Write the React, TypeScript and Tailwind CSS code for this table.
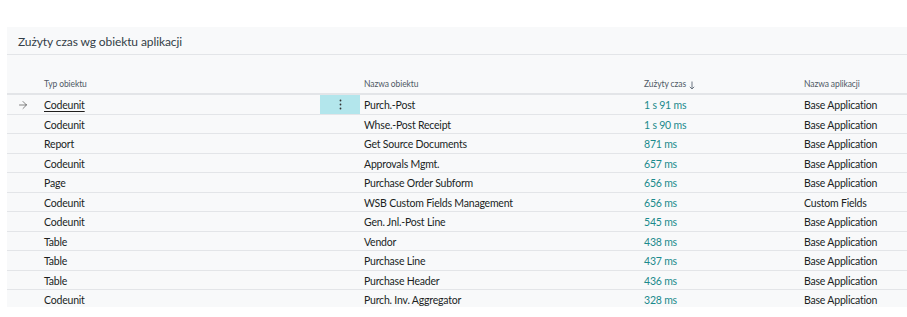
import { ArrowRight } from "lucide-react";

const rows = [
  { type: "Codeunit", name: "Purch.-Post", time: "1 s 91 ms", app: "Base Application" },
  { type: "Codeunit", name: "Whse.-Post Receipt", time: "1 s 90 ms", app: "Base Application" },
  { type: "Report", name: "Get Source Documents", time: "871 ms", app: "Base Application" },
  { type: "Codeunit", name: "Approvals Mgmt.", time: "657 ms", app: "Base Application" },
  { type: "Page", name: "Purchase Order Subform", time: "656 ms", app: "Base Application" },
  { type: "Codeunit", name: "WSB Custom Fields Management", time: "656 ms", app: "Custom Fields" },
  { type: "Codeunit", name: "Gen. Jnl.-Post Line", time: "545 ms", app: "Base Application" },
  { type: "Table", name: "Vendor", time: "438 ms", app: "Base Application" },
  { type: "Table", name: "Purchase Line", time: "437 ms", app: "Base Application" },
  { type: "Table", name: "Purchase Header", time: "436 ms", app: "Base Application" },
  { type: "Codeunit", name: "Purch. Inv. Aggregator", time: "328 ms", app: "Base Application" },
];

const cols = "grid grid-cols-[37px_276px_40px_280px_160px_1fr]";

export default function App() {
  return (
    <div className="w-[907px] h-[317px] bg-white pt-[27px] pl-[7px] font-['Lato',sans-serif] overflow-hidden">
      <div className="bg-[#f8f9fa] h-[280px] overflow-hidden">
        {/* title */}
        <div className="h-[28px] border-b border-[#e3e5e8] flex items-center pl-[11px] pt-[2px]">
          <span className="text-[12px] tracking-[-0.1px] text-[#333d47]">Zużyty czas wg obiektu aplikacji</span>
        </div>

        {/* column headers */}
        <div className={`${cols} mt-[19px] h-[21px] border-b-2 border-[#e3e5e8] items-center text-[8.5px] tracking-[-0.1px] text-[#505a66] pt-[2px]`}>
          <div />
          <div>Typ obiektu</div>
          <div />
          <div className="pl-[4px]">Nazwa obiektu</div>
          <div className="pl-[4px] flex items-center gap-[3px]">
            Zużyty czas
            <svg width="6" height="9" viewBox="0 0 6 9" className="mt-[1px]">
              <path d="M3 0.5V8M0.8 5.8L3 8L5.2 5.8" stroke="#6b7580" strokeWidth="1" fill="none" />
            </svg>
          </div>
          <div className="pl-[4px]">Nazwa aplikacji</div>
        </div>

        {rows.map((r, i) => (
          <div
            key={i}
            className={`${cols} h-[19.5px] border-b border-[#e3e5e8] items-center text-[10.5px] tracking-[-0.2px] text-[#201f1e] pt-[3px]`}
          >
            <div className="pl-[10px] flex items-center -mt-[1px]">
              {i === 0 && <ArrowRight size={12} strokeWidth={1.2} className="text-[#333]" />}
            </div>
            <div className={i === 0 ? "underline underline-offset-2" : ""}>{r.type}</div>
            <div className={`-mt-[3px] h-[18.5px] flex items-center justify-center ${i === 0 ? "bg-[#b3e6ec]" : ""}`}>
              {i === 0 && (
                <svg width="3" height="11" viewBox="0 0 3 11">
                  <circle cx="1.5" cy="1.5" r="0.9" fill="#333" />
                  <circle cx="1.5" cy="5.5" r="0.9" fill="#333" />
                  <circle cx="1.5" cy="9.5" r="0.9" fill="#333" />
                </svg>
              )}
            </div>
            <div className="pl-[4px] whitespace-nowrap">{r.name}</div>
            <div className="pl-[4px] text-[#1a8a8c]">{r.time}</div>
            <div className="pl-[4px]">{r.app}</div>
          </div>
        ))}
      </div>
    </div>
  );
}
